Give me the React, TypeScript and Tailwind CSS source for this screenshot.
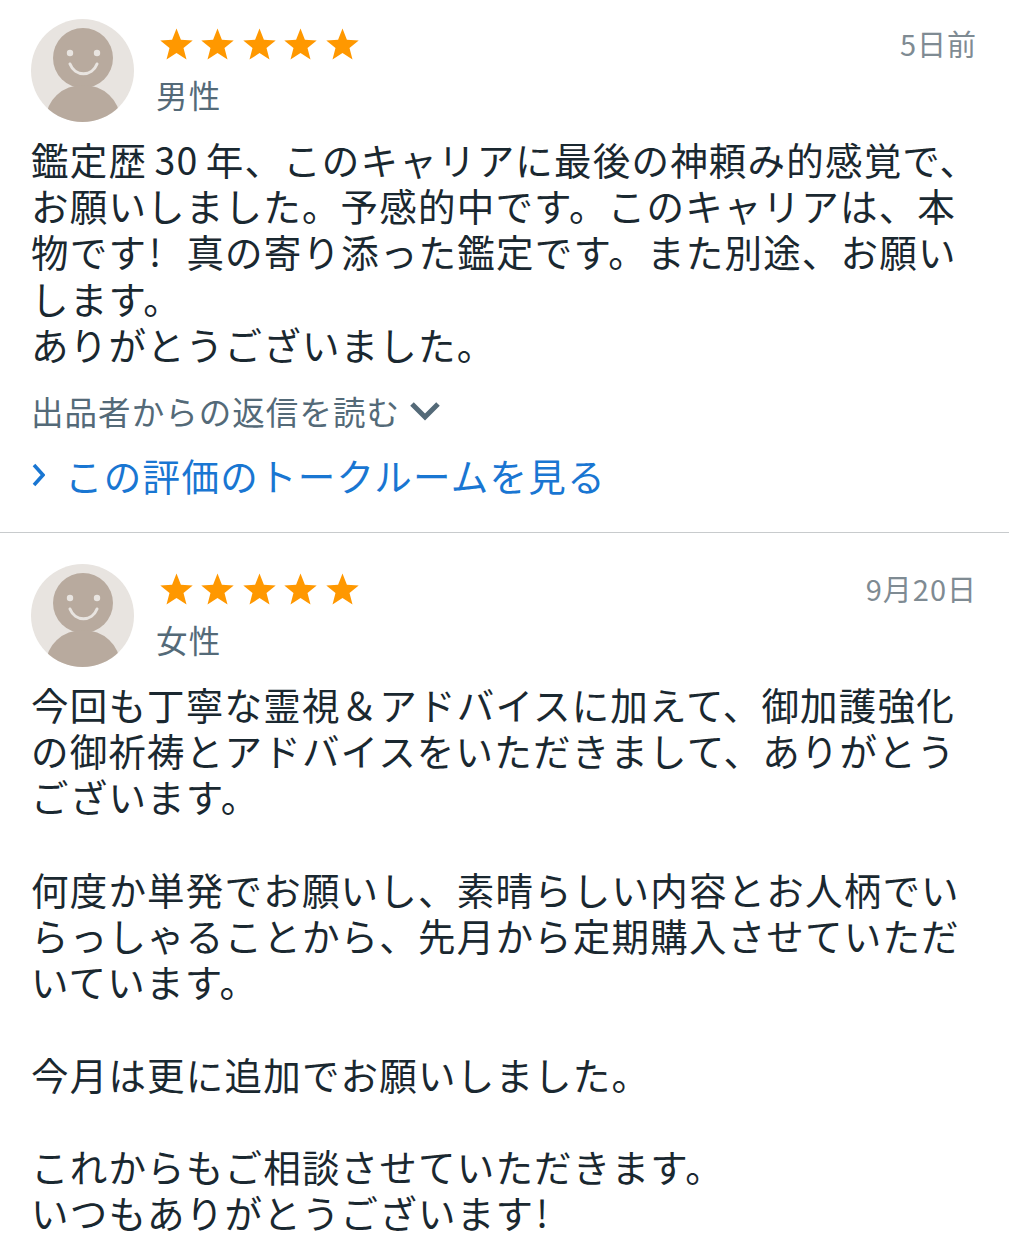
const font = "font-['Noto_Sans_CJK_JP','Noto_Sans',sans-serif]";

function Star() {
  return (
    <svg width="33" height="32" viewBox="0 0 33 32" className="shrink-0">
      <path d="M16.5 0.5l4.4 11.2 11.8.7-9.2 7.6 3 11.6-10-6.5-10 6.5 3-11.6-9.2-7.6 11.8-.7z" fill="#ff9800" />
    </svg>
  );
}

function Avatar({ id }: { id: string }) {
  return (
    <svg width="103" height="103" viewBox="0 0 103 103" className="shrink-0">
      <defs>
        <clipPath id={id}><circle cx="51.5" cy="51.5" r="51.5" /></clipPath>
      </defs>
      <circle cx="51.5" cy="51.5" r="51.5" fill="#e8e4e0" />
      <g clipPath={`url(#${id})`} fill="#b8aa9e">
        <circle cx="52" cy="39" r="30" />
        <ellipse cx="52" cy="100" rx="37" ry="34" />
      </g>
      <path d="M39 45c5 13 22 13 27 0" fill="none" stroke="#e8e4e0" strokeWidth="3" strokeLinecap="round" />
      <circle cx="39" cy="34" r="3.2" fill="#e8e4e0" />
      <circle cx="66" cy="34" r="3.2" fill="#e8e4e0" />
    </svg>
  );
}

function Head({ g, d, id }: { g: string; d: string; id: string }) {
  return (
    <div className="flex pr-[12px]">
      <Avatar id={id} />
      <div className="ml-[26px] flex-1">
        <div className="flex h-[49px] items-center gap-[8.4px]">
          {[0, 1, 2, 3, 4].map((i) => <Star key={i} />)}
        </div>
        <div className="-ml-[4px] mt-[4px] text-[31.5px] leading-[44px] tracking-[1.2px] text-[#546a78]">{g}</div>
      </div>
      <div className="-mt-[1px] text-[29px] leading-[50px] tracking-[1px] text-[#7f8b93]">{d}</div>
    </div>
  );
}

function Body({ children }: { children: React.ReactNode }) {
  return <div className="mt-[14px] whitespace-pre-line text-[37.5px] leading-[46.2px] tracking-[1.2px] text-[#1a2830]">{children}</div>;
}

export default function App() {
  return (
    <div className={`${font} h-[1240px] w-[1009px] overflow-hidden bg-white`}>
      <section className="h-[533px] border-b border-[#c8cbcd] pl-[31px] pr-[20px] pt-[19px]">
        <Head g="男性" d="5日前" id="a1" />
        <Body>
          鑑定歴<span className="mx-[7.5px] tracking-[1px]">30</span>{"年、このキャリアに最後の神頼み的感覚で、\nお願いしました。予感的中です。このキャリアは、本\n物です"}<span className="ml-[2px] mr-[24px]">!</span>{"真の寄り添った鑑定です。また別途、お願い\nします。\nありがとうございました。"}
        </Body>
        <div className="mt-[22px] flex h-[44px] items-center text-[32.5px] tracking-[1.05px] text-[#546a78]">
          出品者からの返信を読む
          <svg width="36" height="24" viewBox="0 0 36 24" className="ml-[7px]"><path d="M5 5l13 13L31 5" fill="none" stroke="#546a78" strokeWidth="5" /></svg>
        </div>
        <div className="mt-[20px] flex h-[44px] items-center text-[37.5px] tracking-[1.3px] text-[#1976d2]">
          <svg width="14" height="26" viewBox="0 0 14 26" className="mr-[20px]"><path d="M3 3l9 10-9 10" fill="none" stroke="#1976d2" strokeWidth="3.5" /></svg>
          この評価のトークルームを見る
        </div>
      </section>
      <section className="pl-[31px] pr-[20px] pt-[31px]">
        <Head g="女性" d="9月20日" id="a2" />
        <Body>{"今回も丁寧な霊視＆アドバイスに加えて、御加護強化\nの御祈祷とアドバイスをいただきまして、ありがとう\nございます。\n\n何度か単発でお願いし、素晴らしい内容とお人柄でい\nらっしゃることから、先月から定期購入させていただ\nいています。\n\n今月は更に追加でお願いしました。\n\nこれからもご相談させていただきます。\nいつもありがとうございます"}<span className="ml-[2px]">!</span></Body>
      </section>
    </div>
  );
}
